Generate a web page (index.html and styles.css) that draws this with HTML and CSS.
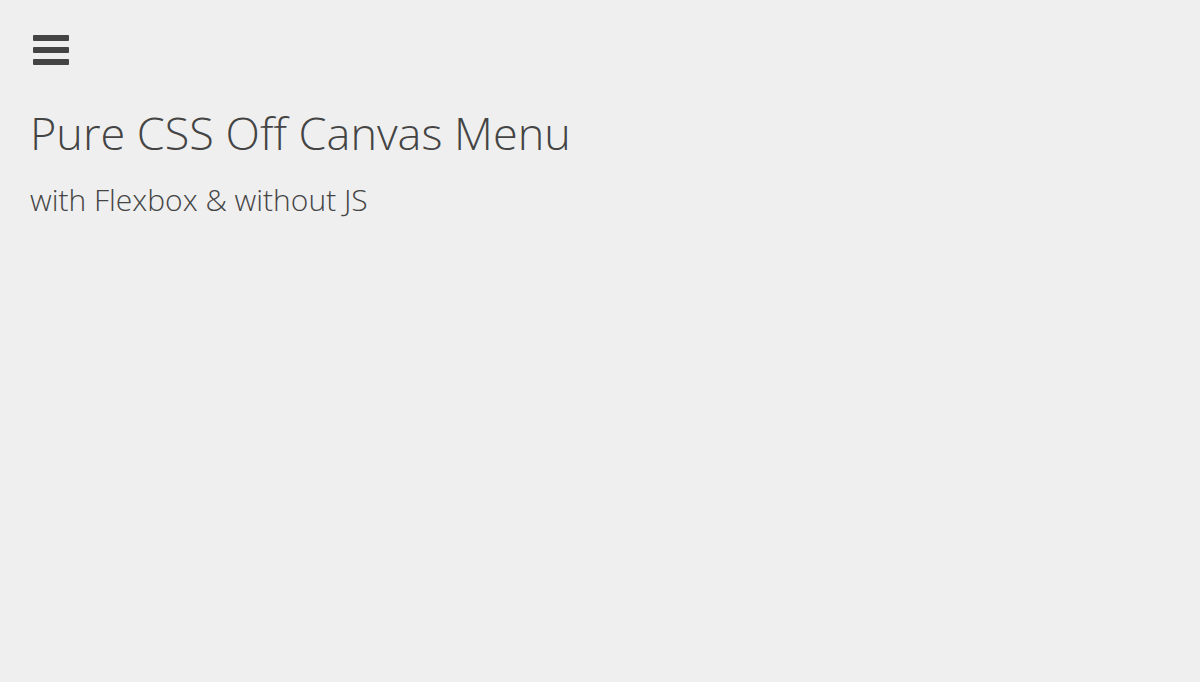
FILE: index.html
```html
<!DOCTYPE html>
<html>
<head>
<meta charset="utf-8">
<link rel="stylesheet" href="styles.css">
</head>
<body>
<div class="page">
  <div class="menu-toggle" aria-label="menu">
    <span class="bar"></span><span class="bar"></span><span class="bar"></span>
  </div>
  <h1 class="title">Pure CSS Off Canvas Menu</h1>
  <h2 class="subtitle">with Flexbox &amp; without JS</h2>
</div>
</body>
</html>
```
FILE: styles.css
```css
html, body {
  margin: 0;
  padding: 0;
  background: #efefef;
}
body {
  font-family: "Open Sans", sans-serif;
  font-weight: 300;
  color: #444;
}
.page {
  padding: 35px 30px 0 30px;
}
.menu-toggle {
  display: flex;
  flex-direction: column;
  gap: 6px;
  width: 36px;
  margin-left: 3px;
}
.bar {
  display: block;
  height: 6px;
  background: #444;
  border-radius: 1px;
}
.title {
  font-size: 45px;
  font-weight: 300;
  margin: 39px 0 0 0;
  line-height: 1.3;
}
.subtitle {
  font-size: 30px;
  font-weight: 300;
  margin: 17px 0 0 0;
  line-height: 1.3;
}
```
